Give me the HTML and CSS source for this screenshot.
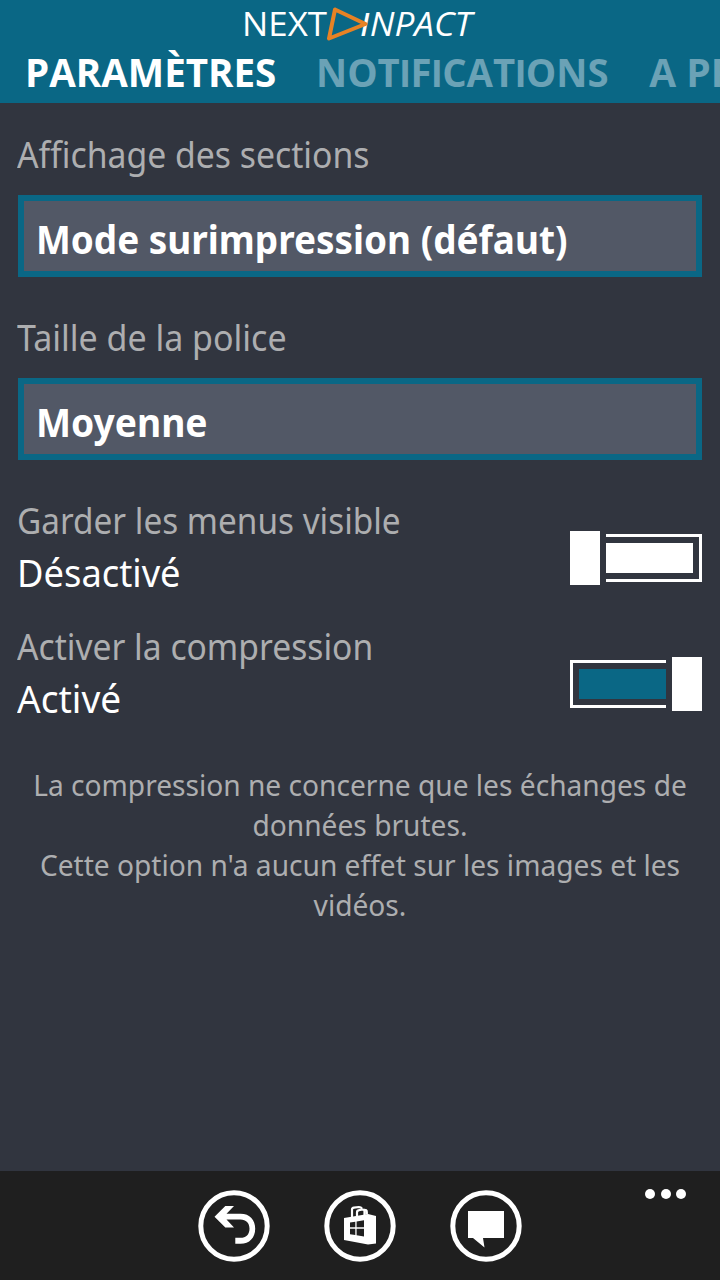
FILE: index.html
```html
<!DOCTYPE html>
<html lang="fr">
<head>
<meta charset="utf-8">
<title>Paramètres</title>
<link rel="stylesheet" href="styles.css">
</head>
<body>
<div class="app">
  <header class="header">
    <svg class="logo" width="240" height="46" viewBox="240 0 240 46">
      <text class="logo-text" x="242" y="36" textLength="85" lengthAdjust="spacingAndGlyphs">NEXT</text>
      <text class="logo-text logo-italic" x="360" y="36" textLength="112" lengthAdjust="spacingAndGlyphs"><tspan class="bar">I</tspan>NPACT</text>
      <path d="M335 9.500 L365.500 24 L329 38.500 Z" fill="#0a6785" stroke="#e78224" stroke-width="4" stroke-linejoin="round"/>
    </svg>
    <nav class="tabs">
      <span class="tab tab-active">PARAMÈTRES</span>
      <span class="tab tab-notifications">NOT<span class="bar">I</span>F<span class="bar">I</span>CAT<span class="bar">I</span>ONS</span>
      <span class="tab tab-about">A PROPOS</span>
    </nav>
  </header>
  <main class="content">
    <div class="label label-sections">Affichage des sections</div>
    <div class="select"><span class="mode">Mode surimpression (défaut)</span></div>
    <div class="label label-font">Taille de la police</div>
    <div class="select"><span class="size">Moyenne</span></div>
    <section class="option">
      <div>
        <div class="label label-menus">Garder les menus visible</div>
        <div class="state state-off">Désactivé</div>
      </div>
      <div class="switch"><i class="thumb"></i><i class="track"><i class="fill"></i></i></div>
    </section>
    <section class="option">
      <div>
        <div class="label label-compression">Activer la compression</div>
        <div class="state state-on">Activé</div>
      </div>
      <div class="switch switch-on"><i class="thumb"></i><i class="track"><i class="fill"></i></i></div>
    </section>
    <p class="help">La compression ne concerne que les échanges de<br>données brutes.<br>Cette option n'a aucun effet sur les images et les<br>vidéos.</p>
  </main>
  <footer class="appbar">
    <svg class="icon" width="72" height="72" viewBox="0 0 72 72">
      <circle cx="36" cy="36" r="33.200"/>
      <path class="solid" d="M16.500 26.700 L27.300 16 H36 L28.500 23.700 H42.500 C52 23.700 57.200 30 57.200 38.700 C57.200 47.500 51.500 53.800 42.500 53.800 H37.300 V47.800 H42.500 C48 47.800 51.500 44.500 51.500 38.700 C51.500 33 48 29.500 42.500 29.500 H28.500 L36 37.500 H27.300 Z"/>
    </svg>
    <svg class="icon" width="72" height="72" viewBox="0 0 72 72">
      <circle cx="36" cy="36" r="33.200"/>
      <path class="solid" d="M20 28 L44 24 L52 26 V53.500 L44 54.500 L20 50 Z"/>
      <path class="handle" d="M28 27 V19.500 Q28 18 30 17.700 L35 17 Q37 17 38 18.500 M33 26 V22.500 Q33 20.500 35 20.200 L38.500 19.500 Q40.500 19.500 40.500 21.500 V25 M40 19.800 Q42.800 19.500 42.800 22 V24.500"/>
      <path class="pane" d="M26 32.500 L31.300 31.700 V37.300 H26 Z M32.600 31.500 L40 30.300 V37.300 H32.600 Z M26 38.700 H31.300 V45 L26 44.200 Z M32.600 38.700 H40 V46.500 L32.600 45.300 Z"/>
    </svg>
    <svg class="icon" width="72" height="72" viewBox="0 0 72 72">
      <circle cx="36" cy="36" r="33.200"/>
      <path class="solid" d="M18 21 H54 V48 H33 L34.500 57.500 L23 48 H18 Z"/>
    </svg>
    <div class="more"><i></i><i></i><i></i></div>
  </footer>
</div>
</body>
</html>
```
FILE: styles.css
```css
* { box-sizing: border-box; }
body { margin: 0; background: #31353f; font-family: "Noto Sans", "Open Sans", sans-serif; }
.app { width: 720px; height: 1280px; display: flex; flex-direction: column; overflow: hidden; background: #31353f; }
.header { height: 103px; background: #0a6785; flex: none; overflow: hidden; font-family: "Open Sans", sans-serif; }
.logo { display: block; margin: 0 auto 1px; }
.logo-text { font-size: 33px; fill: #fff; }
.logo-italic { font-style: italic; }
.bar { font-family: "Liberation Sans", Arial, sans-serif; }
.tabs { display: flex; gap: 40px; padding-left: 25px; white-space: nowrap; height: 50px; line-height: 50px; font-size: 39px; font-weight: 700; }
.tab { flex: none; color: #6ba2b6; transform-origin: left; }
.tab-active { color: #fff; transform: scaleX(.988); }
.tab-notifications { margin-left: -3px; transform: scaleX(.982); }
.tab-about { margin-left: -5px; }
.content { flex: 1; padding: 27px 18px 0; }
.label, .state, .mode, .size { transform-origin: left; white-space: nowrap; }
.label { height: 48px; line-height: 50px; font-size: 36px; color: #adaeb0; margin-left: -1px; }
.label-sections { transform: scaleX(.9375); }
.label-font { transform: scaleX(.944); }
.label-menus { transform: scaleX(.926); }
.label-compression { transform: scaleX(.934); }
.select { height: 82px; margin: 17px 0 36px; border: 6px solid #0a6785; background: #525866; color: #fff; font-size: 38.500px; font-weight: 700; line-height: 76px; padding-left: 12px; white-space: nowrap; }
.mode, .size { display: inline-block; }
.mode { transform: scaleX(.9585); }
.size { transform: scaleX(.966); }
.option { display: flex; justify-content: space-between; align-items: flex-start; height: 126px; }
.state { height: 52px; line-height: 52px; font-size: 39px; color: #fff; margin: 2px 0 0 -1px; }
.state-off { transform: scaleX(.931); }
.state-on { transform: scaleX(.95); }
.switch { display: flex; gap: 6px; align-items: center; width: 132px; height: 54px; margin-top: 35px; }
.switch-on { flex-direction: row-reverse; }
.thumb { width: 30px; height: 54px; background: #fff; }
.track { display: flex; width: 96px; height: 48px; border: 3px solid #fff; border-left: 0; padding: 6px 6px 6px 0; }
.switch-on .track { border-left: 3px solid #fff; border-right: 0; padding: 6px 0 6px 6px; }
.fill { flex: 1; background: #fff; }
.switch-on .fill { background: #0a6785; }
.help { margin: 17px 0 0; text-align: center; font-size: 29px; line-height: 40px; color: #adaeb0; white-space: nowrap; transform: scaleX(.97); }
.appbar { position: relative; flex: none; height: 109px; display: flex; justify-content: center; gap: 54px; padding-top: 19px; background: #1f1f1f; }
.icon circle { fill: none; stroke: #fff; stroke-width: 5; }
.solid { fill: #fff; }
.handle { fill: none; stroke: #fff; stroke-width: 2.200; }
.pane { fill: #1f1f1f; }
.more { position: absolute; right: 34px; top: 18px; display: flex; gap: 5.500px; }
.more i { width: 10px; height: 10px; border-radius: 50%; background: #fff; }
```
